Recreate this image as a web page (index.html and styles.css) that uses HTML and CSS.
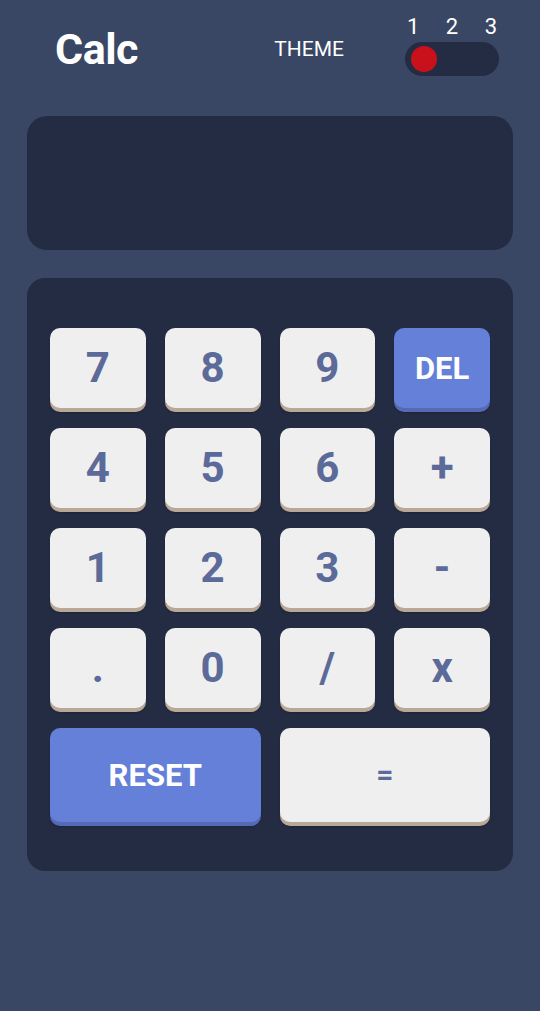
FILE: index.html
```html
<!DOCTYPE html>
<html lang="en">
<head>
<meta charset="utf-8">
<title>Calc</title>
<link rel="stylesheet" href="styles.css">
</head>
<body>
<main class="app">
  <header class="header">
    <h1 class="logo">Calc</h1>
    <div class="theme">
      <span class="theme-label">THEME</span>
      <div class="switch">
        <div class="switch-nums"><span>1</span><span>2</span><span>3</span></div>
        <div class="switch-track"><span class="switch-dot"></span></div>
      </div>
    </div>
  </header>
  <section class="screen"></section>
  <section class="keypad">
    <button class="key">7</button>
    <button class="key">8</button>
    <button class="key">9</button>
    <button class="key key-blue key-word">DEL</button>
    <button class="key">4</button>
    <button class="key">5</button>
    <button class="key">6</button>
    <button class="key">+</button>
    <button class="key">1</button>
    <button class="key">2</button>
    <button class="key">3</button>
    <button class="key">-</button>
    <button class="key">.</button>
    <button class="key">0</button>
    <button class="key">/</button>
    <button class="key">x</button>
    <button class="key key-wide key-blue key-word">RESET</button>
    <button class="key key-wide key-eq">=</button>
  </section>
</main>
</body>
</html>
```

FILE: styles.css
```css
* { box-sizing: border-box; }
html, body {
  margin: 0;
  padding: 0;
  background: #3a4764;
  font-family: Roboto, "Liberation Sans", sans-serif;
}
.app {
  width: 540px;
  height: 1011px;
  padding: 0 27px;
}
.header {
  display: flex;
  align-items: flex-start;
  height: 116px;
  padding: 15px 14px 0 28px;
}
.logo {
  margin: 13px 0 0;
  font-size: 43px;
  line-height: 1;
  font-weight: 700;
  color: #ffffff;
  letter-spacing: -0.5px;
}
.theme {
  margin-left: auto;
  display: flex;
  align-items: flex-start;
  gap: 61px;
}
.theme-label {
  margin-top: 24px;
  font-size: 21px;
  line-height: 1;
  font-weight: 400;
  color: #ffffff;
}
.switch {
  width: 94px;
  display: flex;
  flex-direction: column;
  gap: 3px;
}
.switch-nums {
  display: flex;
  justify-content: space-between;
  padding: 0 2px;
  font-size: 22px;
  line-height: 24px;
  color: #ffffff;
}
.switch-track {
  height: 34px;
  border-radius: 17px;
  background: #242c44;
  padding: 4px 6px;
  display: flex;
  align-items: center;
}
.switch-dot {
  width: 26px;
  height: 26px;
  border-radius: 50%;
  background: #c8111b;
}
.screen {
  height: 134px;
  border-radius: 20px;
  background: #242c44;
}
.keypad {
  margin-top: 28px;
  height: 593px;
  border-radius: 18px;
  background: #242c44;
  padding: 50px 23px 0;
  display: grid;
  grid-template-columns: repeat(4, 1fr);
  grid-template-rows: repeat(4, 80px) 94px;
  column-gap: 19px;
  row-gap: 20px;
}
.key {
  border: 0;
  margin: 0;
  padding: 0;
  border-radius: 10px;
  background: #efefef;
  box-shadow: 0 4px 0 #b9a898, 0 5px 2px rgba(20, 20, 30, 0.35);
  color: #5b6a99;
  font-family: Roboto, "Liberation Sans", sans-serif;
  font-weight: 700;
  font-size: 42px;
  line-height: 1;
  display: flex;
  align-items: center;
  justify-content: center;
}
.key-blue {
  background: #6580d8;
  box-shadow: 0 4px 0 #5569b4, 0 5px 2px rgba(20, 20, 30, 0.35);
  color: #ffffff;
}
.key-word {
  font-size: 31px;
}
.key-wide {
  grid-column: span 2;
}
.key-eq {
  font-size: 30px;
}
```
